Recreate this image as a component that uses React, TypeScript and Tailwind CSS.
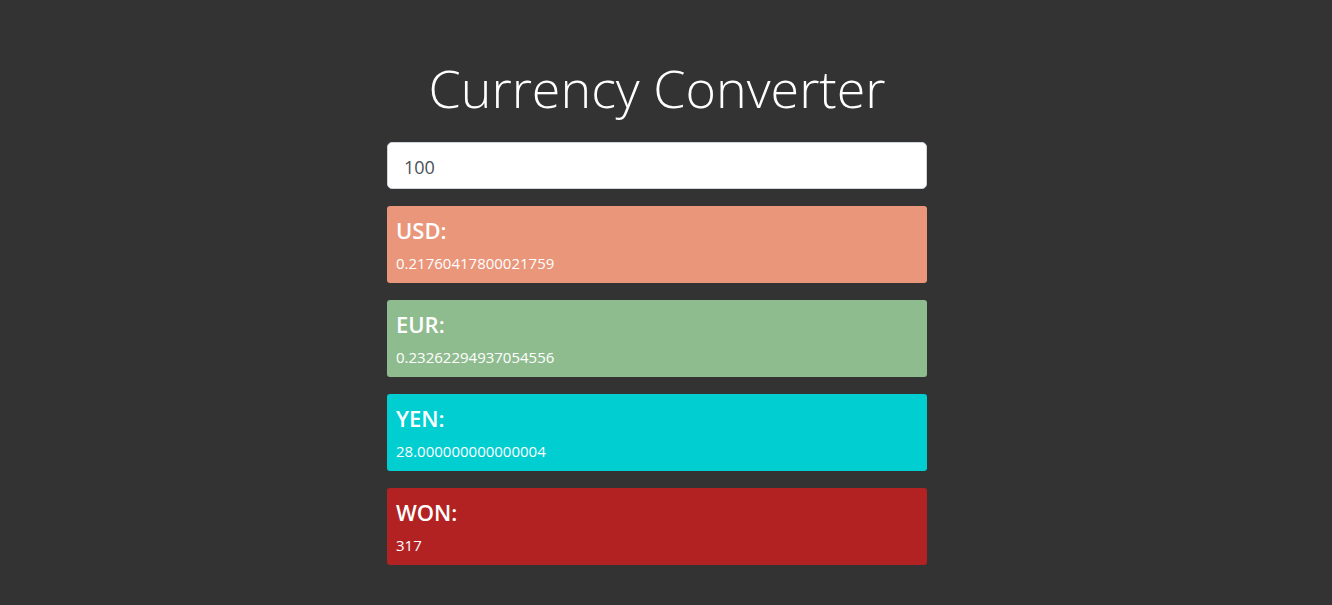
import React from 'react'

const rates = [
  { code: 'USD', value: '0.21760417800021759', bg: 'bg-[#e9967a]' },
  { code: 'EUR', value: '0.23262294937054556', bg: 'bg-[#8fbc8f]' },
  { code: 'YEN', value: '28.000000000000004', bg: 'bg-[#00ced1]' },
  { code: 'WON', value: '317', bg: 'bg-[#b22222]' },
]

const App = () => {
  return (
    <div className="min-h-screen w-full bg-[#333333] flex flex-col items-center pt-[52px] pr-[18px] font-['Open_Sans',sans-serif]">
      <h1 className="text-[52px] leading-[72px] font-light text-white mb-[18px]">
        Currency Converter
      </h1>
      <div className="w-[540px] flex flex-col gap-[17px]">
        <input
          type="text"
          defaultValue="100"
          className="h-[47px] w-full rounded-[5px] border border-[#ced4da] bg-white px-4 pt-[3px] text-[18px] text-[#495057] outline-none"
        />
        {rates.map((r) => (
          <div key={r.code} className={`${r.bg} h-[77px] rounded-[3px] px-[9px] pt-[9px] text-white`}>
            <h4 className="text-[22px] leading-[30px] font-semibold">{r.code}:</h4>
            <p className="text-[15px] leading-[20px] mt-[8px]">{r.value}</p>
          </div>
        ))}
      </div>
    </div>
  )
}

export default App
